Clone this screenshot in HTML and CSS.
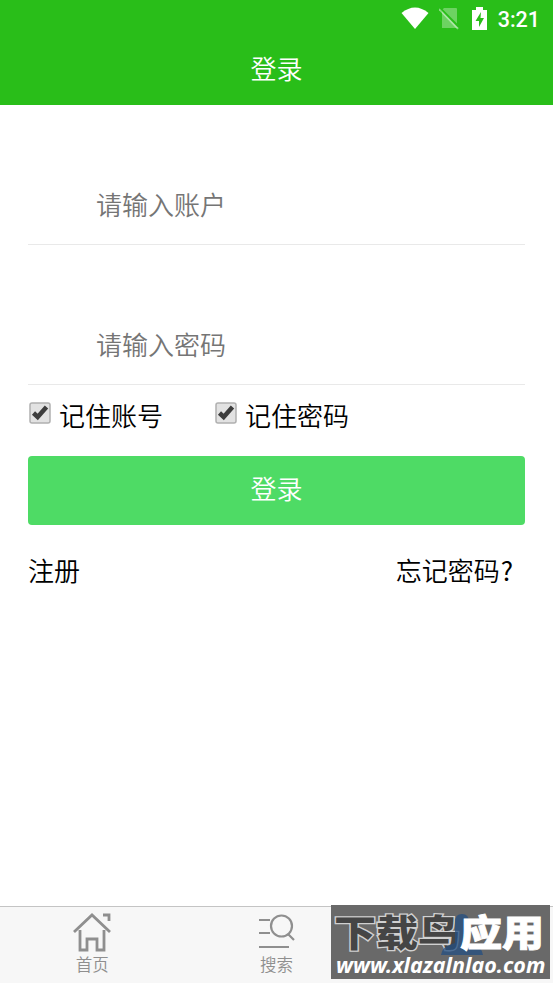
FILE: index.html
```html
<!DOCTYPE html>
<html lang="zh-CN">
<head>
<meta charset="utf-8">
<title>登录</title>
<link rel="stylesheet" href="styles.css">
</head>
<body>
<header class="header">
  <div class="status">
    <svg class="wifi" width="28" height="24" viewBox="0 0 28 24"><path d="M.5 6Q14-5 27.500 6L14 22Z" fill="#fff"/></svg>
    <svg class="sim" width="22" height="24" viewBox="0 0 22 24"><path d="M3 3 5 1H17Q18 1 18 2V17L20 20 19 21H3Z" fill="#fff" opacity=".32"/><path d="M2 2 20 20" stroke="#29be19" stroke-width="2"/><path d="M0 2 19 22" stroke="#fff" stroke-width="1.800" opacity=".45"/></svg>
    <svg class="battery" width="15" height="24" viewBox="0 0 15 24"><path d="M0 3H4V0H11V3H15V23H0Z" fill="#fff"/><path d="M9 5 3.500 14H7V20L12 11H8.500Z" fill="#29be19"/></svg>
    <span class="time">3:21</span>
  </div>
  <h1 class="title">登录</h1>
</header>
<main class="form">
  <input class="field" type="text" placeholder="请输入账户">
  <input class="field" type="password" placeholder="请输入密码">
  <div class="options">
    <label class="option"><svg class="check" width="22" height="22" viewBox="0 0 22 22"><rect x="1" y="1" width="20" height="20" rx="2" fill="#e2e2e2" stroke="#b0b0b0" stroke-width="1.500"/><path d="M4.500 11 8.700 15 17.500 5" fill="none" stroke="#3d3d3d" stroke-width="4.500"/></svg>记住账号</label>
    <label class="option"><svg class="check" width="22" height="22" viewBox="0 0 22 22"><rect x="1" y="1" width="20" height="20" rx="2" fill="#e2e2e2" stroke="#b0b0b0" stroke-width="1.500"/><path d="M4.500 11 8.700 15 17.500 5" fill="none" stroke="#3d3d3d" stroke-width="4.500"/></svg>记住密码</label>
  </div>
  <button class="submit">登录</button>
  <div class="links"><a>注册</a><a>忘记密码<span class="mark">?</span></a></div>
</main>
<nav class="tabs">
  <a class="tab">
    <svg width="40" height="40" viewBox="0 0 40 40" fill="none" stroke="#8f8f8f" stroke-width="2.800"><path d="M2 20 20 3 38 20M8 18V38H15V27H25V38H32V18M31 3H37V9"/></svg>
    <span>首页</span>
  </a>
  <a class="tab">
    <svg width="40" height="40" viewBox="0 0 40 40" fill="none" stroke="#8f8f8f" stroke-width="2.200"><path d="M3 8H14M3 21H14M3 35H33M32 22 38 28"/><circle cx="25.500" cy="14" r="10.500"/></svg>
    <span>搜索</span>
  </a>
  <a class="tab"></a>
</nav>
<aside class="watermark">
  <svg class="person" width="44" height="62" viewBox="0 0 44 62"><path d="M15 9Q15 1 22 1T29 9V30Q42 33 43 42H1Q2 33 15 30Z" fill="#244f82" opacity=".75"/></svg>
  <div class="brand"><span class="dark">下载鸟</span><span class="light">应用</span></div>
  <div class="url">www.xlazalnlao.com</div>
</aside>
</body>
</html>
```
FILE: styles.css
```css
* { box-sizing: border-box; }
body {
  margin: 0;
  height: 983px;
  display: flex;
  flex-direction: column;
  position: relative;
  overflow: hidden;
  background: #fff;
  color: #000;
  font: 300 26px/38px "Noto Sans CJK SC DemiLight", "Noto Sans CJK SC", sans-serif;
}
.header { height: 105px; background: #29be19; color: #fff; }
.status {
  height: 38px;
  padding: 7px 13px 0 0;
  display: flex;
  justify-content: flex-end;
  align-items: flex-start;
}
.wifi { margin-right: 10px; }
.sim { margin-right: 11px; }
.battery { margin-right: 11px; }
.time { font: 500 21.5px/25px Roboto, sans-serif; }
.title { margin: 11px 0 0; font-size: 26px; line-height: 38px; font-weight: 300; text-align: center; }
.form { flex: 1; padding: 0 28px; display: flex; flex-direction: column; }
.field {
  height: 80px;
  margin: 60px 0 0;
  padding: 0 0 3px 68px;
  border: 0;
  border-bottom: 1px solid #e9e9e9;
  background: none;
  font: inherit;
}
.field::placeholder { color: #757575; opacity: 1; }
.options { display: flex; height: 71px; padding: 11px 0 0 1px; }
.option { width: 186px; height: 38px; display: flex; gap: 8px; }
.check { margin-top: 6px; }
.submit {
  height: 69px;
  padding: 0 0 5px;
  border: 0;
  border-radius: 4px;
  background: #4edb65;
  color: #fff;
  font: inherit;
}
.links { display: flex; justify-content: space-between; padding: 26px 12px 0 0; }
.mark { margin-left: 1px; font-family: "Noto Sans CJK SC", sans-serif; font-weight: 400; }
.tabs { height: 77px; display: flex; background: #f7f7f7; border-top: 1px solid #c4c4c4; }
.tab {
  flex: 1;
  padding-top: 5px;
  display: flex;
  flex-direction: column;
  align-items: center;
  color: #8f8f8f;
  font-size: 16.5px;
  line-height: 24px;
}
.watermark {
  position: absolute;
  left: 331px;
  top: 905px;
  width: 219px;
  height: 74px;
  background: #696969;
  color: #fff;
  white-space: nowrap;
}
.person { position: absolute; left: 109px; top: 8px; z-index: 1; }
.brand {
  display: flex;
  height: 48px;
  padding: 0 0 0 3px;
  font-family: "Noto Sans CJK SC", sans-serif;
  font-size: 42px;
  line-height: 52px;
  font-weight: 900;
}
.dark, .light { height: 48px; transform: scaleY(.88); }
.dark { color: #454545; -webkit-text-stroke: 3px #d0d0d0; paint-order: stroke fill; }
.light { position: relative; z-index: 2; -webkit-text-stroke: 1px #fff; }
.url { position: relative; z-index: 2; height: 24px; padding-left: 5px; font: italic 700 21.500px/24px "Noto Sans", sans-serif; }
```
